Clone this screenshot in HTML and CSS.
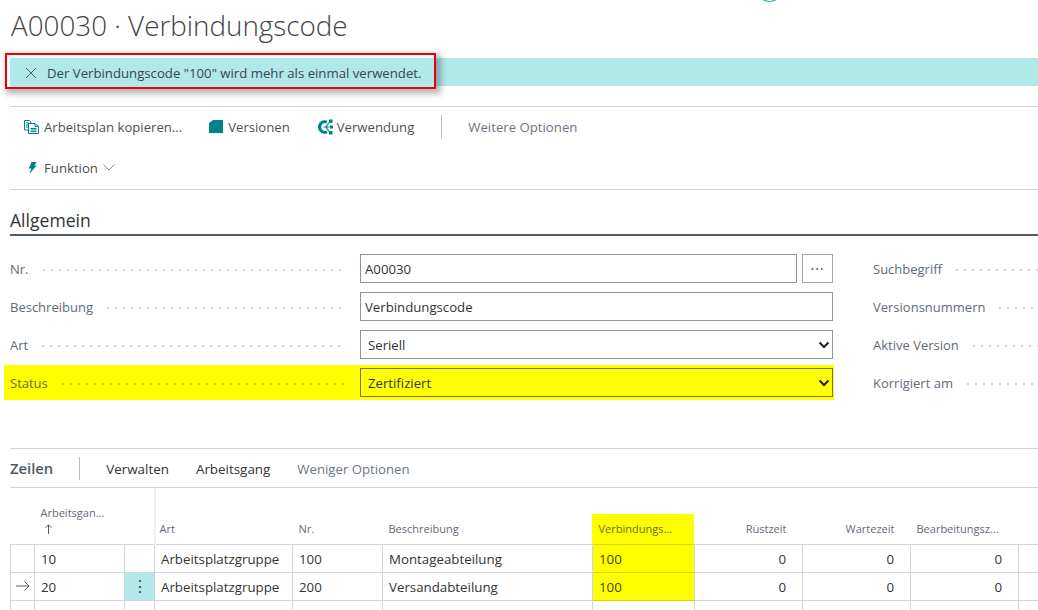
FILE: index.html
```html
<!DOCTYPE html>
<html lang="de">
<head>
<meta charset="utf-8">
<title>A00030 · Verbindungscode</title>
<link rel="stylesheet" href="styles.css">
</head>
<body>
<div class="page">
  <span class="top-ring"></span>
  <h1 class="title">A00030 · Verbindungscode</h1>
  <div class="banner">
    <div class="message">
      <svg class="close" width="12" height="12" viewBox="0 0 12 12"><path d="M1 1l10 10M11 1L1 11" stroke="#505c6d" stroke-width="1" fill="none"/></svg>
      <span>Der Verbindungscode "100" wird mehr als einmal verwendet.</span>
    </div>
  </div>
  <div class="actions">
    <div class="action-row">
      <span class="action a1"><svg width="16" height="14" viewBox="0 0 16 14"><g fill="none" stroke="#00828a" stroke-width="1"><path d="M.5 .5h5l1.500 1.500v1M.5 .5v9.500h3.500M2 3h3M2 5h2M2 7h2"/><path d="M4.500 3.500h6.500l3.500 3v7h-10zM11 3.500v3h3.500M6.500 8.500h6M6.500 10h6M6.500 11.700h6"/></g></svg>Arbeitsplan kopieren...</span>
      <span class="action a2"><svg width="14" height="13" viewBox="0 0 14 13"><path d="M0 3L4 0h10v13H0z" fill="#00828a"/></svg>Versionen</span>
      <span class="action a3"><svg width="16" height="16" viewBox="0 0 16 16"><path d="M10.500 1.800A6.800 6.800 0 0 0 1 8a6.800 6.800 0 0 0 9.500 6.200L9.300 11.500A3.500 3.500 0 0 1 4.300 8a3.500 3.500 0 0 1 5-3.500z" fill="#00828a"/><path d="M6.500 8h6M9 8l3-4.500M9 8l3 4.500" stroke="#00828a" stroke-width="1.200" fill="none"/><path d="M12 .5h3.500v3.500h-3.500zM13 6.500h3v3h-3zM12 12h3.500v3.500h-3.500z" fill="#00828a"/></svg>Verwendung</span>
      <span class="vsep"></span>
      <span class="action more">Weitere Optionen</span>
    </div>
    <div class="action-row second">
      <span class="action a4"><svg width="9" height="12" viewBox="0 0 9 12"><path d="M3.500 0H8.500L6.500 3.500H8.500L1.500 12L3.300 6.500H.8z" fill="#00828a"/></svg>Funktion<svg class="chev" width="12" height="7" viewBox="0 0 12 7"><path d="M.5 .5L6 6l5.500-5.500" stroke="#8a8f96" fill="none"/></svg></span>
    </div>
  </div>
  <h2 class="section">Allgemein</h2>
  <div class="form">
    <div class="form-left">
      <div class="field"><span class="label">Nr.</span><span class="dots"></span><span class="input grow">A00030</span><span class="assist">···</span></div>
      <div class="field"><span class="label">Beschreibung</span><span class="dots"></span><span class="input grow">Verbindungscode</span></div>
      <div class="field"><span class="label">Art</span><span class="dots"></span><span class="input grow select">Seriell<svg class="sel" width="12" height="8" viewBox="0 0 12 8"><path d="M1.500 1.500L6 6l4.500-4.500" stroke="#222" stroke-width="2" fill="none"/></svg></span></div>
      <div class="field hl"><span class="label">Status</span><span class="dots"></span><span class="input grow select">Zertifiziert<svg class="sel" width="12" height="8" viewBox="0 0 12 8"><path d="M1.500 1.500L6 6l4.500-4.500" stroke="#222" stroke-width="2" fill="none"/></svg></span></div>
    </div>
    <div class="form-right">
      <div class="rfield"><span class="label">Suchbegriff</span><span class="dots"></span></div>
      <div class="rfield"><span class="label">Versionsnummern</span><span class="dots"></span></div>
      <div class="rfield"><span class="label">Aktive Version</span><span class="dots"></span></div>
      <div class="rfield"><span class="label">Korrigiert am</span><span class="dots"></span></div>
    </div>
  </div>
  <div class="lines-bar">
    <span class="lines-title">Zeilen</span>
    <span class="vsep small"></span>
    <span class="lines-act">Verwalten</span>
    <span class="lines-act">Arbeitsgang</span>
    <span class="lines-act more">Weniger Optionen</span>
  </div>
  <table class="grid">
    <colgroup>
      <col class="c1"><col class="c2"><col class="c3"><col class="c4"><col class="c5"><col class="c6"><col class="c7"><col class="c8"><col class="c8"><col class="c8"><col>
    </colgroup>
    <thead>
      <tr>
        <th class="plain"></th>
        <th class="stack" colspan="2"><span>Arbeitsgan...</span><svg class="arrow" width="7" height="10" viewBox="0 0 7 10"><path d="M3.500 10V1M.5 3.800L3.500 .8l3 3" stroke="#505c6d" fill="none"/></svg></th>
        <th class="frozen">Art</th>
        <th>Nr.</th>
        <th>Beschreibung</th>
        <th class="hl-head"><div>Verbindungs...</div></th>
        <th class="num">Rüstzeit</th>
        <th class="num">Wartezeit</th>
        <th class="num wide">Bearbeitungsz...</th>
        <th></th>
      </tr>
    </thead>
    <tbody>
      <tr><td></td><td>10</td><td></td><td>Arbeitsplatzgruppe</td><td>100</td><td>Montageabteilung</td><td class="hl-cell">100</td><td class="num">0</td><td class="num">0</td><td class="num">0</td><td></td></tr>
      <tr><td class="cur"><svg width="14" height="10" viewBox="0 0 14 10"><path d="M0 5h13M8.500 .5L13 5l-4.500 4.500" stroke="#505c6d" fill="none"/></svg></td><td>20</td><td class="menu">⋮</td><td>Arbeitsplatzgruppe</td><td>200</td><td>Versandabteilung</td><td class="hl-cell">100</td><td class="num">0</td><td class="num">0</td><td class="num">0</td><td></td></tr>
      <tr><td></td><td></td><td></td><td></td><td></td><td></td><td></td><td></td><td></td><td></td><td></td></tr>
    </tbody>
  </table>
</div>
</body>
</html>
```
FILE: styles.css
```css
* { box-sizing: border-box; }
html, body { margin: 0; padding: 0; background: #fff; }
body { font-family: "Open Sans", "Noto Sans", sans-serif; font-size: 13px; color: #333; width: 1038px; height: 610px; overflow: hidden; }
.page { position: relative; width: 1038px; height: 610px; padding-left: 10px; overflow: hidden; }
.top-ring { position: absolute; left: 755px; top: -27px; width: 29px; height: 29px; border: 1.500px solid #1f9ea6; border-radius: 50%; }
.title { margin: 0; height: 58px; padding: 6px 0 0 1px; font-size: 27.800px; line-height: 38px; font-weight: 300; color: #444; white-space: nowrap; }
.banner { display: flow-root; height: 28px; background: #b1e8ea; }
.message { display: flex; align-items: center; width: 431px; height: 36px; margin: -5px 0 0 -5px; padding: 3px 0 0 18px; gap: 10px; border: 2px solid #e8000d; box-shadow: inset 3px 3px 0 #eef9f9, 3px 3px 6px 2px rgba(0,0,0,.28); background: #b1e8ea; color: #3a4452; font-size: 13.200px; white-space: nowrap; }
.close { flex: none; }
.actions { margin-top: 20px; border-top: 1px solid #d4d4d4; border-bottom: 1px solid #d4d4d4; height: 84px; }
.action-row { display: flex; align-items: center; height: 41px; padding: 0 0 2px 14px; }
.action { display: inline-flex; align-items: center; gap: 4px; color: #505050; white-space: nowrap; font-size: 13.150px; }
.a2 { margin-left: 27px; gap: 5px; }
.a3 { margin-left: 27px; gap: 4px; }
.a4 { padding-left: 4px; gap: 7px; font-size: 13.200px; }
.chev { margin-left: -2px; }
.vsep { display: inline-block; width: 1px; height: 23px; background: #b5bbc4; margin-left: 27px; }
.more { color: #6b7585; margin-left: 26px; font-size: 13.200px; }
.section { margin: 17px 0 0; height: 29px; font-size: 17.600px; line-height: 26px; font-weight: 500; color: #333; border-bottom: 2px solid #505c6d; }
.form { display: flex; margin-top: 18px; }
.form-left { width: 823px; }
.form-right { flex: 1; margin-left: 40px; }
.field, .rfield { display: flex; align-items: center; height: 29px; margin-bottom: 9px; }
.label { color: #5f6b7a; white-space: nowrap; font-size: 13px; }
.dots { flex: 1; height: 2px; margin: 2px 14px 0 11px; background-image: radial-gradient(circle, #d0d3d8 0.800px, transparent 1px); background-size: 8px 2px; background-repeat: repeat-x; }
.rfield .dots { margin-right: 0; }
.field .input { flex: 0 0 auto; }
.input { display: flex; align-items: center; height: 29px; border: 1px solid #8a96a3; padding-left: 4px; background: #fff; color: #333; font-size: 13.200px; }
.field:nth-child(1) .input { width: 437px; }
.field:nth-child(n+2) .input { width: 473px; }
.select { padding-left: 7px; justify-content: space-between; padding-right: 2px; }
.assist { flex: none; display: flex; align-items: center; justify-content: center; width: 31px; height: 29px; margin-left: 5px; border: 1px solid #a6a6a6; color: #444; font-size: 14px; letter-spacing: 1px; }
.hl { background: #ff0; margin: -3px 0 0 -6px; padding: 3px 1px 3px 6px; height: 35px; width: 830px; }
.hl .label { color: #6a6b2a; }
.hl .dots { background-image: radial-gradient(circle, #d0d018 0.800px, transparent 1px); }
.hl .input { background: #ff0; border-color: #77772a; }
.lines-bar { display: flex; align-items: center; height: 40px; margin-top: 42px; border-top: 1px solid #d4d4d4; border-bottom: 1px solid #d4d4d4; }
.lines-title { font-size: 14.800px; font-weight: 600; color: #505a66; }
.vsep.small { margin-left: 26px; }
.lines-act { margin-left: 27px; padding-top: 1px; color: #333; font-size: 13.400px; }
.vsep.small + .lines-act { margin-left: 26px; }
.lines-act.more { color: #6b7585; font-size: 13.200px; }
.grid { table-layout: fixed; border-collapse: collapse; width: 1028px; font-size: 13.300px; }
.c1 { width: 24px; } .c2 { width: 90px; } .c3 { width: 30px; } .c4 { width: 138px; } .c5 { width: 90px; } .c6 { width: 210px; } .c7 { width: 102px; } .c8 { width: 108px; }
th { height: 56px; padding: 0 6px 8px; vertical-align: bottom; text-align: left; font-weight: 400; font-size: 11px; color: #5f6b7a; white-space: nowrap; }
.stack span { display: block; line-height: 14px; margin-bottom: 4px; }
.stack .arrow { display: block; margin-left: 4px; }
.stack { padding-bottom: 10px; }
.frozen { border-left: 2px solid #f0f0f0; padding-left: 4px; }
td { height: 28px; padding: 1px 6px 0; border: 1px solid #d4d4dc; color: #333; white-space: nowrap; overflow: hidden; }
td:last-child { border-right: none; }
tbody tr:last-child td { border-bottom: none; }
.num { text-align: right; padding-right: 16px; }
th.num { padding-right: 16px; }
th.wide { padding-right: 6px; text-align: left; }
.cur { padding: 0 0 0 5px; }
.cur svg { display: block; }
.menu { background: #b1e8ea; text-align: center; padding: 0; font-size: 16px; font-weight: 400; color: #3a4452; }
.hl-head { padding: 0; }
.hl-head div { height: 30px; margin-left: -1px; margin-right: 1px; padding: 8px 0 0 7px; background: #ff0; color: #6a6b2a; line-height: 14px; }
th.hl-head { padding-bottom: 0; }
.hl-cell { background: #ff0; border-color: #d6d600; border-right-color: #d4d4dc; color: #444400; }
```
